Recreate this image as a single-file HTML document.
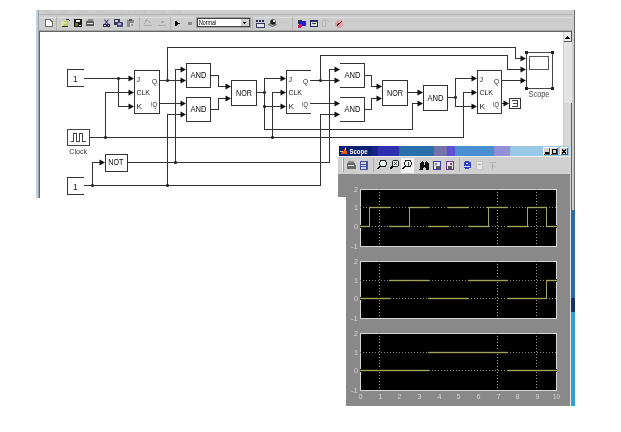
<!DOCTYPE html>
<html><head><meta charset="utf-8"><style>
html,body{margin:0;padding:0;background:#fff;width:621px;height:432px;overflow:hidden}
svg{display:block;font-family:"Liberation Sans",sans-serif;will-change:transform}
</style></head><body>
<svg width="621" height="432" viewBox="0 0 621 432" shape-rendering="crispEdges">
<rect x="36" y="10" width="539" height="21" fill="#cdcdcd"/><rect x="36" y="10" width="3" height="188" fill="#c2cfdc"/><rect x="38" y="10" width="1" height="188" fill="#9aa4ae"/><clipPath id="mc"><rect x="39" y="10" width="500" height="4"/></clipPath><g clip-path="url(#mc)"><text x="42" y="13" font-size="8" text-anchor="start" fill="#c2c2c2" font-weight="normal" textLength="10" lengthAdjust="spacingAndGlyphs" >File</text><text x="58" y="13" font-size="8" text-anchor="start" fill="#c2c2c2" font-weight="normal" textLength="10" lengthAdjust="spacingAndGlyphs" >Edit</text><text x="76" y="13" font-size="8" text-anchor="start" fill="#c2c2c2" font-weight="normal" textLength="12" lengthAdjust="spacingAndGlyphs" >View</text><text x="96" y="13" font-size="8" text-anchor="start" fill="#c2c2c2" font-weight="normal" textLength="28" lengthAdjust="spacingAndGlyphs" >Simulation</text><text x="128" y="13" font-size="8" text-anchor="start" fill="#c2c2c2" font-weight="normal" textLength="19" lengthAdjust="spacingAndGlyphs" >Format</text><text x="152" y="13" font-size="8" text-anchor="start" fill="#c2c2c2" font-weight="normal" textLength="14" lengthAdjust="spacingAndGlyphs" >Tools</text><text x="170" y="13" font-size="8" text-anchor="start" fill="#c2c2c2" font-weight="normal" textLength="12" lengthAdjust="spacingAndGlyphs" >Help</text></g><rect x="39" y="14" width="534" height="1" fill="#b0b0b0"/><rect x="39" y="17" width="534" height="1" fill="#dedede"/><rect x="39" y="30" width="534" height="1" fill="#a8a8a8"/><rect x="39" y="31" width="525" height="167" fill="#666"/><rect x="40" y="32" width="524" height="166" fill="#ffffff"/><rect x="563" y="32" width="9" height="179" fill="#cdcdcd"/><rect x="572" y="10" width="2" height="200" fill="#cdcdcd"/><rect x="574" y="10" width="1" height="200" fill="#6a6a6a"/><rect x="39" y="31" width="533" height="1" fill="#666"/><rect x="564" y="32" width="7" height="9" fill="#ececec"/><rect x="571" y="31" width="1" height="11" fill="#555"/><rect x="564" y="41" width="8" height="1" fill="#555"/><path d="M565 39 L567.5 36 L570 39 Z" fill="#000"/><rect x="564" y="42" width="8" height="61" fill="#e4e4e4"/><rect x="564" y="103" width="7" height="108" fill="#d8d8d8"/><rect x="571" y="103" width="1" height="108" fill="#606060"/><rect x="571" y="210" width="4" height="88" fill="#2c6aa6"/><rect x="571" y="298" width="4" height="14" fill="#123466"/><rect x="571" y="312" width="4" height="94" fill="#2fa0d4"/><rect x="570" y="210" width="1" height="196" fill="#e8e8e8"/><path d="M45.5 19.5 H50 L52.5 22 V26.5 H45.5 Z" fill="#fff" stroke="#6a6a6a"/><rect x="56" y="17" width="1" height="13" fill="#b4b2ae"/><path d="M61 26 L63 21 H69 L67 26 Z" fill="#b8c860"/><path d="M61 21 H64 V22 H67 V23 L62 26 H61 Z" fill="#d8e8a0"/><path d="M61.5 26.5 L67.5 26.5" stroke="#303010"/><path d="M66 19.5 L68.5 19.5 L69.5 21" stroke="#333" fill="none"/><rect x="74" y="19" width="8" height="8" fill="#1a1a10"/><rect x="76" y="20" width="4" height="2" fill="#e8e8e0"/><rect x="75" y="23" width="3" height="3" fill="#707030"/><rect x="79" y="25" width="2" height="1" fill="#ddd"/><path d="M86 22 Q86 20.5 88 20.5 H92 Q94 20.5 94 22 V26 H86 Z" fill="#5a5a5a" shape-rendering="geometricPrecision"/><rect x="87" y="23" width="6" height="1" fill="#ddd"/><rect x="88" y="19" width="5" height="2" fill="#888"/><path d="M104.5 19.5 L108.5 24.5 M108.5 19.5 L104.5 24.5" stroke="#3a3a78" stroke-width="1.2" shape-rendering="geometricPrecision"/><circle cx="105" cy="25.5" r="1.4" fill="none" stroke="#2a2a60"/><circle cx="108.5" cy="25.5" r="1.4" fill="none" stroke="#2a2a60"/><rect x="114" y="19" width="6" height="6" fill="#3a3a58"/><rect x="115" y="20" width="3" height="2" fill="#c8c8d8"/><rect x="117" y="22" width="6" height="5" fill="#4a4a80"/><rect x="118" y="23" width="3" height="2" fill="#b0b0d0"/><rect x="127" y="20" width="7" height="7" fill="#8a8a8a"/><rect x="129" y="19" width="3" height="2" fill="#555"/><rect x="130" y="23" width="4" height="4" fill="#d0d0d0"/><rect x="131" y="24" width="2" height="2" fill="#999"/><rect x="139" y="17" width="1" height="13" fill="#b4b2ae"/><path d="M144 25.5 H151.5 M144.5 24 L146.5 19.5 L150.5 23" stroke="#aaa" fill="none"/><path d="M157.5 25.5 H165.5" stroke="#aaa"/><rect x="161" y="21" width="3" height="2" fill="#b0b0b0"/><rect x="170" y="17" width="1" height="13" fill="#b4b2ae"/><path d="M175 20.5 L179.5 23.5 L175 26.5 Z" fill="#000"/><rect x="188" y="22" width="4" height="3" fill="#888"/><rect x="196" y="17" width="55" height="11" fill="#a0a0a0"/><rect x="197" y="18" width="53" height="9" fill="#454545"/><rect x="198" y="19" width="51" height="7" fill="#fff"/><text x="199" y="25.2" font-size="8" text-anchor="start" fill="#000" font-weight="normal" textLength="17" lengthAdjust="spacingAndGlyphs" >Normal</text><rect x="241" y="19" width="8" height="7" fill="#d0d0d0"/><path d="M242.5 22 H246.5 L244.5 24.5 Z" fill="#000"/><rect x="252" y="17" width="1" height="13" fill="#b4b2ae"/><rect x="256" y="20" width="2" height="2" fill="#2a2a58"/><rect x="259" y="20" width="2" height="2" fill="#2a2a58"/><rect x="262" y="20" width="2" height="2" fill="#2a2a58"/><rect x="256" y="23" width="9" height="5" fill="#3a3a60"/><rect x="257" y="24" width="7" height="3" fill="#e4e4ec"/><path d="M268.5 24.5 L272.5 22.5 L276.5 24.5 L272.5 26.5 Z" fill="#a8a8a8" stroke="#666" shape-rendering="geometricPrecision"/><circle cx="273" cy="22" r="2.7" fill="#1a1a1a" shape-rendering="geometricPrecision"/><rect x="273" y="20" width="2" height="2" fill="#f0f0f0"/><rect x="281" y="22" width="2" height="1" fill="#c0c0c0"/><rect x="284" y="22" width="2" height="1" fill="#c0c0c0"/><rect x="287" y="22" width="1" height="1" fill="#c0c0c0"/><rect x="292" y="17" width="1" height="13" fill="#b4b2ae"/><rect x="298" y="20" width="4" height="4" fill="#1a3a40"/><rect x="300" y="21" width="6" height="5" fill="#2020d0"/><circle cx="300" cy="26" r="2" fill="#d02060"/><rect x="310" y="20" width="8" height="7" fill="#2a2a70"/><rect x="311" y="22" width="6" height="4" fill="#d8e0d0"/><rect x="312" y="23" width="4" height="1" fill="#404860"/><path d="M322.5 26.5 V21.5 L325 19.5 L329.5 22 M325.5 21 V26.5 H322.5" stroke="#b8b8b8" fill="none"/><circle cx="339" cy="24" r="3.8" fill="#e0a0a8"/><path d="M336.5 26.5 L341.5 21.5 M337.5 25.5 L339 23" stroke="#300" stroke-width="1.4"/><rect x="67" y="69" width="17" height="1" fill="#333"/><rect x="67" y="86" width="17" height="1" fill="#333"/><rect x="67" y="69" width="1" height="18" fill="#333"/><text x="75.3" y="81.5" font-size="8.5" text-anchor="middle" fill="#222" font-weight="normal" >1</text><rect x="84" y="78" width="47" height="1" fill="#333"/><path d="M128.5 75.5 L134 78.5 L128.5 81.5 Z" fill="#111" shape-rendering="geometricPrecision"/><rect x="117" y="77" width="3" height="3" fill="#777"/><rect x="117" y="78" width="3" height="1" fill="#222"/><rect x="118" y="77" width="1" height="3" fill="#222"/><rect x="118" y="78" width="1" height="29" fill="#333"/><rect x="118" y="106" width="13" height="1" fill="#333"/><path d="M128.5 103.5 L134 106.5 L128.5 109.5 Z" fill="#111" shape-rendering="geometricPrecision"/><rect x="134" y="70" width="26" height="1" fill="#333"/><rect x="134" y="113" width="26" height="1" fill="#333"/><rect x="134" y="70" width="1" height="44" fill="#333"/><rect x="159" y="70" width="1" height="44" fill="#333"/><text x="136.5" y="81.5" font-size="8" text-anchor="start" fill="#1a1a1a" font-weight="normal" textLength="3.5" lengthAdjust="spacingAndGlyphs" >J</text><text x="136.5" y="95.3" font-size="8" text-anchor="start" fill="#1a1a1a" font-weight="normal" textLength="13.5" lengthAdjust="spacingAndGlyphs" >CLK</text><text x="136.5" y="109" font-size="8" text-anchor="start" fill="#1a1a1a" font-weight="normal" textLength="5.5" lengthAdjust="spacingAndGlyphs" >K</text><text x="157" y="84" font-size="8" text-anchor="end" fill="#1a1a1a" font-weight="normal" textLength="5" lengthAdjust="spacingAndGlyphs" >Q</text><text x="157" y="106.5" font-size="8" text-anchor="end" fill="#1a1a1a" font-weight="normal" textLength="6" lengthAdjust="spacingAndGlyphs" >!Q</text><rect x="105" y="92" width="26" height="1" fill="#333"/><path d="M128.5 89.5 L134 92.5 L128.5 95.5 Z" fill="#111" shape-rendering="geometricPrecision"/><rect x="105" y="92" width="1" height="46" fill="#333"/><rect x="104" y="136" width="3" height="3" fill="#777"/><rect x="104" y="137" width="3" height="1" fill="#222"/><rect x="105" y="136" width="1" height="3" fill="#222"/><rect x="67" y="129" width="23" height="1" fill="#444"/><rect x="67" y="145" width="23" height="1" fill="#444"/><rect x="67" y="129" width="1" height="17" fill="#444"/><rect x="89" y="129" width="1" height="17" fill="#444"/><path d="M70.5 141.5 H73.5 V133.5 H76.5 V141.5 H79.5 V133.5 H82.5 V141.5 H85.5" stroke="#444" fill="none"/><text x="78.2" y="153.5" font-size="8" text-anchor="middle" fill="#333" font-weight="normal" textLength="18" lengthAdjust="spacingAndGlyphs" >Clock</text><rect x="89" y="137" width="375" height="1" fill="#333"/><rect x="105" y="154" width="23" height="1" fill="#333"/><rect x="105" y="171" width="23" height="1" fill="#333"/><rect x="105" y="154" width="1" height="18" fill="#333"/><rect x="127" y="154" width="1" height="18" fill="#333"/><text x="115.8" y="165.3" font-size="8.5" text-anchor="middle" fill="#0a0a0a" font-weight="normal" textLength="15" lengthAdjust="spacingAndGlyphs" >NOT</text><rect x="67" y="177" width="17" height="1" fill="#333"/><rect x="67" y="194" width="17" height="1" fill="#333"/><rect x="67" y="177" width="1" height="18" fill="#333"/><text x="75.3" y="189.5" font-size="8.5" text-anchor="middle" fill="#222" font-weight="normal" >1</text><rect x="84" y="185" width="237" height="1" fill="#333"/><rect x="91" y="184" width="3" height="3" fill="#777"/><rect x="91" y="185" width="3" height="1" fill="#222"/><rect x="92" y="184" width="1" height="3" fill="#222"/><rect x="92" y="162" width="1" height="24" fill="#333"/><rect x="92" y="162" width="10" height="1" fill="#333"/><path d="M99.5 159.5 L105 162.5 L99.5 165.5 Z" fill="#111" shape-rendering="geometricPrecision"/><rect x="127" y="162" width="203" height="1" fill="#333"/><rect x="175" y="69" width="1" height="94" fill="#333"/><rect x="175" y="69" width="8" height="1" fill="#333"/><path d="M180.5 66.5 L186 69.5 L180.5 72.5 Z" fill="#111" shape-rendering="geometricPrecision"/><rect x="174" y="161" width="3" height="3" fill="#777"/><rect x="174" y="162" width="3" height="1" fill="#222"/><rect x="175" y="161" width="1" height="3" fill="#222"/><rect x="167" y="114" width="1" height="72" fill="#333"/><rect x="167" y="114" width="16" height="1" fill="#333"/><path d="M180.5 111.5 L186 114.5 L180.5 117.5 Z" fill="#111" shape-rendering="geometricPrecision"/><rect x="166" y="184" width="3" height="3" fill="#777"/><rect x="166" y="185" width="3" height="1" fill="#222"/><rect x="167" y="184" width="1" height="3" fill="#222"/><rect x="159" y="80" width="24" height="1" fill="#333"/><path d="M180.5 77.5 L186 80.5 L180.5 83.5 Z" fill="#111" shape-rendering="geometricPrecision"/><rect x="166" y="79" width="3" height="3" fill="#777"/><rect x="166" y="80" width="3" height="1" fill="#222"/><rect x="167" y="79" width="1" height="3" fill="#222"/><rect x="167" y="47" width="1" height="34" fill="#333"/><rect x="167" y="47" width="349" height="1" fill="#333"/><rect x="515" y="47" width="1" height="12" fill="#333"/><rect x="515" y="58" width="8" height="1" fill="#333"/><path d="M520.5 55.5 L526 58.5 L520.5 61.5 Z" fill="#111" shape-rendering="geometricPrecision"/><rect x="159" y="103" width="24" height="1" fill="#333"/><path d="M180.5 100.5 L186 103.5 L180.5 106.5 Z" fill="#111" shape-rendering="geometricPrecision"/><rect x="186" y="63" width="25" height="1" fill="#333"/><rect x="186" y="87" width="25" height="1" fill="#333"/><rect x="186" y="63" width="1" height="25" fill="#333"/><rect x="210" y="63" width="1" height="25" fill="#333"/><text x="198.5" y="78.2" font-size="8.5" text-anchor="middle" fill="#0a0a0a" font-weight="normal" textLength="16" lengthAdjust="spacingAndGlyphs" >AND</text><rect x="186" y="97" width="25" height="1" fill="#333"/><rect x="186" y="121" width="25" height="1" fill="#333"/><rect x="186" y="97" width="1" height="25" fill="#333"/><rect x="210" y="97" width="1" height="25" fill="#333"/><text x="198.5" y="112.2" font-size="8.5" text-anchor="middle" fill="#0a0a0a" font-weight="normal" textLength="16" lengthAdjust="spacingAndGlyphs" >AND</text><rect x="210" y="75" width="9" height="1" fill="#333"/><rect x="218" y="75" width="1" height="12" fill="#333"/><rect x="218" y="86" width="10" height="1" fill="#333"/><path d="M225.5 83.5 L231 86.5 L225.5 89.5 Z" fill="#111" shape-rendering="geometricPrecision"/><rect x="210" y="109" width="9" height="1" fill="#333"/><rect x="218" y="98" width="1" height="12" fill="#333"/><rect x="218" y="98" width="10" height="1" fill="#333"/><path d="M225.5 95.5 L231 98.5 L225.5 101.5 Z" fill="#111" shape-rendering="geometricPrecision"/><rect x="231" y="80" width="26" height="1" fill="#333"/><rect x="231" y="105" width="26" height="1" fill="#333"/><rect x="231" y="80" width="1" height="26" fill="#333"/><rect x="256" y="80" width="1" height="26" fill="#333"/><text x="244.0" y="95.7" font-size="8.5" text-anchor="middle" fill="#0a0a0a" font-weight="normal" textLength="16" lengthAdjust="spacingAndGlyphs" >NOR</text><rect x="256" y="92" width="9" height="1" fill="#333"/><rect x="263" y="91" width="3" height="3" fill="#777"/><rect x="263" y="92" width="3" height="1" fill="#222"/><rect x="264" y="91" width="1" height="3" fill="#222"/><rect x="264" y="78" width="1" height="52" fill="#333"/><rect x="264" y="78" width="19" height="1" fill="#333"/><path d="M280.5 75.5 L286 78.5 L280.5 81.5 Z" fill="#111" shape-rendering="geometricPrecision"/><rect x="264" y="106" width="19" height="1" fill="#333"/><path d="M280.5 103.5 L286 106.5 L280.5 109.5 Z" fill="#111" shape-rendering="geometricPrecision"/><rect x="263" y="105" width="3" height="3" fill="#777"/><rect x="263" y="106" width="3" height="1" fill="#222"/><rect x="264" y="105" width="1" height="3" fill="#222"/><rect x="264" y="129" width="149" height="1" fill="#333"/><rect x="412" y="103" width="1" height="27" fill="#333"/><rect x="412" y="103" width="8" height="1" fill="#333"/><path d="M417.5 100.5 L423 103.5 L417.5 106.5 Z" fill="#111" shape-rendering="geometricPrecision"/><rect x="286" y="70" width="25" height="1" fill="#333"/><rect x="286" y="113" width="25" height="1" fill="#333"/><rect x="286" y="70" width="1" height="44" fill="#333"/><text x="288.5" y="81.5" font-size="8" text-anchor="start" fill="#1a1a1a" font-weight="normal" textLength="3.5" lengthAdjust="spacingAndGlyphs" >J</text><text x="288.5" y="95.3" font-size="8" text-anchor="start" fill="#1a1a1a" font-weight="normal" textLength="13.5" lengthAdjust="spacingAndGlyphs" >CLK</text><text x="288.5" y="109" font-size="8" text-anchor="start" fill="#1a1a1a" font-weight="normal" textLength="5.5" lengthAdjust="spacingAndGlyphs" >K</text><text x="308" y="84" font-size="8" text-anchor="end" fill="#1a1a1a" font-weight="normal" textLength="5" lengthAdjust="spacingAndGlyphs" >Q</text><text x="308" y="106.5" font-size="8" text-anchor="end" fill="#1a1a1a" font-weight="normal" textLength="6" lengthAdjust="spacingAndGlyphs" >!Q</text><rect x="272" y="92" width="1" height="46" fill="#333"/><rect x="272" y="92" width="11" height="1" fill="#333"/><path d="M280.5 89.5 L286 92.5 L280.5 95.5 Z" fill="#111" shape-rendering="geometricPrecision"/><rect x="271" y="136" width="3" height="3" fill="#777"/><rect x="271" y="137" width="3" height="1" fill="#222"/><rect x="272" y="136" width="1" height="3" fill="#222"/><rect x="310" y="80" width="27" height="1" fill="#333"/><path d="M334.5 77.5 L340 80.5 L334.5 83.5 Z" fill="#111" shape-rendering="geometricPrecision"/><rect x="319" y="79" width="3" height="3" fill="#777"/><rect x="319" y="80" width="3" height="1" fill="#222"/><rect x="320" y="79" width="1" height="3" fill="#222"/><rect x="320" y="55" width="1" height="26" fill="#333"/><rect x="320" y="55" width="188" height="1" fill="#333"/><rect x="507" y="55" width="1" height="15" fill="#333"/><rect x="507" y="69" width="16" height="1" fill="#333"/><path d="M520.5 66.5 L526 69.5 L520.5 72.5 Z" fill="#111" shape-rendering="geometricPrecision"/><rect x="310" y="103" width="27" height="1" fill="#333"/><path d="M334.5 100.5 L340 103.5 L334.5 106.5 Z" fill="#111" shape-rendering="geometricPrecision"/><rect x="329" y="69" width="1" height="94" fill="#333"/><rect x="329" y="69" width="8" height="1" fill="#333"/><path d="M334.5 66.5 L340 69.5 L334.5 72.5 Z" fill="#111" shape-rendering="geometricPrecision"/><rect x="320" y="114" width="1" height="72" fill="#333"/><rect x="320" y="114" width="17" height="1" fill="#333"/><path d="M334.5 111.5 L340 114.5 L334.5 117.5 Z" fill="#111" shape-rendering="geometricPrecision"/><rect x="340" y="63" width="25" height="1" fill="#333"/><rect x="340" y="87" width="25" height="1" fill="#333"/><rect x="364" y="63" width="1" height="25" fill="#333"/><text x="352.5" y="78.2" font-size="8.5" text-anchor="middle" fill="#0a0a0a" font-weight="normal" textLength="16" lengthAdjust="spacingAndGlyphs" >AND</text><rect x="340" y="97" width="25" height="1" fill="#333"/><rect x="340" y="121" width="25" height="1" fill="#333"/><rect x="364" y="97" width="1" height="25" fill="#333"/><text x="352.5" y="112.2" font-size="8.5" text-anchor="middle" fill="#0a0a0a" font-weight="normal" textLength="16" lengthAdjust="spacingAndGlyphs" >AND</text><rect x="364" y="75" width="8" height="1" fill="#333"/><rect x="371" y="75" width="1" height="12" fill="#333"/><rect x="371" y="86" width="8" height="1" fill="#333"/><path d="M376.5 83.5 L382 86.5 L376.5 89.5 Z" fill="#111" shape-rendering="geometricPrecision"/><rect x="364" y="109" width="8" height="1" fill="#333"/><rect x="371" y="98" width="1" height="12" fill="#333"/><rect x="371" y="98" width="8" height="1" fill="#333"/><path d="M376.5 95.5 L382 98.5 L376.5 101.5 Z" fill="#111" shape-rendering="geometricPrecision"/><rect x="382" y="80" width="26" height="1" fill="#333"/><rect x="382" y="105" width="26" height="1" fill="#333"/><rect x="382" y="80" width="1" height="26" fill="#333"/><rect x="407" y="80" width="1" height="26" fill="#333"/><text x="395.0" y="95.7" font-size="8.5" text-anchor="middle" fill="#0a0a0a" font-weight="normal" textLength="16" lengthAdjust="spacingAndGlyphs" >NOR</text><rect x="407" y="92" width="13" height="1" fill="#333"/><path d="M417.5 89.5 L423 92.5 L417.5 95.5 Z" fill="#111" shape-rendering="geometricPrecision"/><rect x="423" y="85" width="25" height="1" fill="#333"/><rect x="423" y="110" width="25" height="1" fill="#333"/><rect x="423" y="85" width="1" height="26" fill="#333"/><rect x="447" y="85" width="1" height="26" fill="#333"/><text x="435.5" y="100.7" font-size="8.5" text-anchor="middle" fill="#0a0a0a" font-weight="normal" textLength="16" lengthAdjust="spacingAndGlyphs" >AND</text><rect x="447" y="97" width="9" height="1" fill="#333"/><rect x="454" y="96" width="3" height="3" fill="#777"/><rect x="454" y="97" width="3" height="1" fill="#222"/><rect x="455" y="96" width="1" height="3" fill="#222"/><rect x="455" y="78" width="1" height="29" fill="#333"/><rect x="455" y="78" width="19" height="1" fill="#333"/><path d="M471.5 75.5 L477 78.5 L471.5 81.5 Z" fill="#111" shape-rendering="geometricPrecision"/><rect x="455" y="106" width="19" height="1" fill="#333"/><path d="M471.5 103.5 L477 106.5 L471.5 109.5 Z" fill="#111" shape-rendering="geometricPrecision"/><rect x="463" y="92" width="1" height="46" fill="#333"/><rect x="463" y="92" width="11" height="1" fill="#333"/><path d="M471.5 89.5 L477 92.5 L471.5 95.5 Z" fill="#111" shape-rendering="geometricPrecision"/><rect x="477" y="70" width="25" height="1" fill="#333"/><rect x="477" y="113" width="25" height="1" fill="#333"/><rect x="477" y="70" width="1" height="44" fill="#333"/><rect x="501" y="70" width="1" height="44" fill="#333"/><text x="479.5" y="81.5" font-size="8" text-anchor="start" fill="#1a1a1a" font-weight="normal" textLength="3.5" lengthAdjust="spacingAndGlyphs" >J</text><text x="479.5" y="95.3" font-size="8" text-anchor="start" fill="#1a1a1a" font-weight="normal" textLength="13.5" lengthAdjust="spacingAndGlyphs" >CLK</text><text x="479.5" y="109" font-size="8" text-anchor="start" fill="#1a1a1a" font-weight="normal" textLength="5.5" lengthAdjust="spacingAndGlyphs" >K</text><text x="499" y="84" font-size="8" text-anchor="end" fill="#1a1a1a" font-weight="normal" textLength="5" lengthAdjust="spacingAndGlyphs" >Q</text><text x="499" y="106.5" font-size="8" text-anchor="end" fill="#1a1a1a" font-weight="normal" textLength="6" lengthAdjust="spacingAndGlyphs" >!Q</text><rect x="501" y="80" width="22" height="1" fill="#333"/><path d="M520.5 77.5 L526 80.5 L520.5 83.5 Z" fill="#111" shape-rendering="geometricPrecision"/><rect x="501" y="103" width="5" height="1" fill="#333"/><path d="M503.5 100.5 L509 103.5 L503.5 106.5 Z" fill="#111" shape-rendering="geometricPrecision"/><rect x="509" y="98" width="12" height="1" fill="#333"/><rect x="509" y="108" width="12" height="1" fill="#333"/><rect x="509" y="98" width="1" height="11" fill="#333"/><rect x="520" y="98" width="1" height="11" fill="#333"/><path d="M512 100.5 H517.5 V106.5 H512 M512.5 103.5 H517" stroke="#444" fill="none"/><rect x="526" y="52" width="27" height="1" fill="#444"/><rect x="526" y="88" width="27" height="1" fill="#444"/><rect x="526" y="52" width="1" height="37" fill="#444"/><rect x="552" y="52" width="1" height="37" fill="#444"/><rect x="529" y="56" width="20" height="1" fill="#555"/><rect x="529" y="69" width="20" height="1" fill="#555"/><rect x="529" y="56" width="1" height="14" fill="#555"/><rect x="548" y="56" width="1" height="14" fill="#555"/><rect x="525" y="51" width="3" height="3" fill="#222"/><rect x="551" y="51" width="3" height="3" fill="#222"/><rect x="525" y="87" width="3" height="3" fill="#222"/><rect x="551" y="87" width="3" height="3" fill="#222"/><text x="539" y="97" font-size="9" text-anchor="middle" fill="#4a4a4a" font-weight="normal" textLength="21" lengthAdjust="spacingAndGlyphs" >Scope</text><rect x="339" y="146" width="230" height="10" fill="#0c2070"/><rect x="372" y="146" width="6" height="10" fill="#1a2488"/><rect x="378" y="146" width="21" height="10" fill="#2e30b0"/><rect x="399" y="146" width="35" height="10" fill="#2a6eaa"/><rect x="434" y="146" width="13" height="10" fill="#7474a8"/><rect x="447" y="146" width="8" height="10" fill="#5c52d4"/><rect x="455" y="146" width="39" height="10" fill="#4a90d0"/><rect x="494" y="146" width="16" height="10" fill="#9490d8"/><rect x="510" y="146" width="59" height="10" fill="#98cae8"/><path d="M341 154 L343.5 151 L345.5 147 L347.5 154 Z" fill="#e06018"/><rect x="340" y="151" width="3" height="1" fill="#f0c080"/><rect x="345" y="148" width="1" height="2" fill="#ffd0a0"/><text x="349.5" y="154" font-size="8" text-anchor="start" fill="#fff" font-weight="bold" textLength="18" lengthAdjust="spacingAndGlyphs" >Scope</text><rect x="543" y="147" width="7" height="8" fill="#d4d2ce"/><path d="M543.5 154.5 V147.5 H549.5" stroke="#fff" fill="none"/><path d="M543.5 154.5 H549.5 V147.5" stroke="#555" fill="none"/><rect x="550" y="147" width="8" height="8" fill="#d4d2ce"/><path d="M550.5 154.5 V147.5 H557.5" stroke="#fff" fill="none"/><path d="M550.5 154.5 H557.5 V147.5" stroke="#555" fill="none"/><rect x="560" y="147" width="8" height="8" fill="#d4d2ce"/><path d="M560.5 154.5 V147.5 H567.5" stroke="#fff" fill="none"/><path d="M560.5 154.5 H567.5 V147.5" stroke="#555" fill="none"/><rect x="545" y="152" width="4" height="2" fill="#000"/><path d="M552.5 149.5 H556.5 V153.5 H552.5 Z" stroke="#000" fill="none"/><rect x="552" y="149" width="5" height="1" fill="#000"/><path d="M562 149.5 L566 153.5 M566 149.5 L562 153.5" stroke="#000" stroke-width="1.1"/><rect x="338" y="156" width="232" height="18" fill="#d0d0d0"/><rect x="338" y="156" width="233" height="1" fill="#eeeeee"/><rect x="342" y="158" width="1" height="14" fill="#f4f4f4"/><rect x="343" y="158" width="1" height="14" fill="#999"/><path d="M346.5 165 Q346.5 163 349 163 H353 Q355.5 163 355.5 165 V168.5 H346.5 Z" fill="#666"/><rect x="348" y="161" width="6" height="2" fill="#888"/><rect x="348" y="165" width="6" height="1" fill="#ddd"/><rect x="360" y="161" width="8" height="9" fill="#4850a0"/><rect x="361" y="162" width="5" height="7" fill="#d0d0e8"/><rect x="361" y="164" width="6" height="1" fill="#5058a8"/><rect x="361" y="166" width="6" height="1" fill="#5058a8"/><rect x="373" y="158" width="1" height="14" fill="#b0b0b0"/><rect x="401" y="158" width="13" height="15" fill="#f2f2f2"/><circle cx="383" cy="163.5" r="3.3" fill="#e8f4f4" stroke="#222" stroke-width="1"/><path d="M380.7 165.8 L377.5 169.0" stroke="#111" stroke-width="1.6"/><circle cx="395.5" cy="163.5" r="3.3" fill="#e8f4f4" stroke="#222" stroke-width="1"/><path d="M393.2 165.8 L390.0 169.0" stroke="#111" stroke-width="1.6"/><path d="M394.0 162.0 L397.0 165.0 M397.0 162.0 L394.0 165.0" stroke="#222" stroke-width="0.8"/><circle cx="408" cy="163.5" r="3.3" fill="#e8f4f4" stroke="#222" stroke-width="1"/><path d="M405.7 165.8 L402.5 169.0" stroke="#111" stroke-width="1.6"/><path d="M408 161.5 V165.5" stroke="#222" stroke-width="0.8"/><path d="M419.5 169.5 L420.5 163 L422.5 161 L424 163 V165 H425 V163 L426.5 161 L428.5 163 L429.5 169.5 L426 169.5 L425 167 H424 L423 169.5 Z" fill="#111"/><rect x="433" y="161" width="8" height="9" fill="#3a40a8"/><rect x="434" y="162" width="6" height="7" fill="#e4e4ec"/><rect x="436" y="166" width="4" height="3" fill="#555"/><rect x="435" y="163" width="2" height="2" fill="#888"/><rect x="446" y="161" width="8" height="9" fill="#6a3a98"/><rect x="447" y="162" width="6" height="7" fill="#ece4ec"/><rect x="448" y="166" width="4" height="3" fill="#555"/><rect x="450" y="163" width="2" height="2" fill="#a04060"/><rect x="459" y="158" width="1" height="14" fill="#b0b0b0"/><path d="M463.5 162 Q467 160 470.5 162 V168 Q467 170 463.5 168 Z" fill="#3040c8"/><path d="M465 164 L467 162.5 L469 164 Z" fill="#fff"/><rect x="464" y="166" width="6" height="1" fill="#dde"/><rect x="476" y="161" width="7" height="9" fill="#c4c4c4"/><rect x="477" y="162" width="5" height="7" fill="#e4e4e4"/><rect x="478" y="164" width="3" height="1" fill="#aaa"/><path d="M489 162.5 H496 M492.5 162.5 V169.5 M490 166 H495" stroke="#b4b4b4" fill="none"/><rect x="338" y="174" width="232" height="23" fill="#898989"/><rect x="346" y="197" width="224" height="209" fill="#898989"/><rect x="360" y="189" width="197" height="58" fill="#000"/><rect x="360.5" y="189.5" width="196" height="57" fill="none" stroke="#d8d8d8"/><line x1="360" y1="207.5" x2="556" y2="207.5" stroke="#8a8a8a" stroke-dasharray="1 2"/><line x1="360" y1="226.5" x2="556" y2="226.5" stroke="#8a8a8a" stroke-dasharray="1 2"/><line x1="379.5" y1="189" x2="379.5" y2="246" stroke="#a0a0a0" stroke-dasharray="1 2"/><line x1="497.5" y1="189" x2="497.5" y2="246" stroke="#a0a0a0" stroke-dasharray="1 2"/><line x1="536.5" y1="189" x2="536.5" y2="246" stroke="#a0a0a0" stroke-dasharray="1 2"/><rect x="360" y="225" width="10" height="3" fill="#1c1c10"/><rect x="360" y="226" width="10" height="1" fill="#a4a45a"/><rect x="369" y="206" width="21" height="3" fill="#1c1c10"/><rect x="369" y="207" width="21" height="1" fill="#a4a45a"/><rect x="389" y="225" width="21" height="3" fill="#1c1c10"/><rect x="389" y="226" width="21" height="1" fill="#a4a45a"/><rect x="409" y="206" width="20" height="3" fill="#1c1c10"/><rect x="409" y="207" width="20" height="1" fill="#a4a45a"/><rect x="428" y="225" width="21" height="3" fill="#1c1c10"/><rect x="428" y="226" width="21" height="1" fill="#a4a45a"/><rect x="448" y="206" width="21" height="3" fill="#1c1c10"/><rect x="448" y="207" width="21" height="1" fill="#a4a45a"/><rect x="468" y="225" width="20" height="3" fill="#1c1c10"/><rect x="468" y="226" width="20" height="1" fill="#a4a45a"/><rect x="487" y="206" width="21" height="3" fill="#1c1c10"/><rect x="487" y="207" width="21" height="1" fill="#a4a45a"/><rect x="507" y="225" width="21" height="3" fill="#1c1c10"/><rect x="507" y="226" width="21" height="1" fill="#a4a45a"/><rect x="527" y="206" width="20" height="3" fill="#1c1c10"/><rect x="527" y="207" width="20" height="1" fill="#a4a45a"/><rect x="546" y="225" width="11" height="3" fill="#1c1c10"/><rect x="546" y="226" width="11" height="1" fill="#a4a45a"/><rect x="369" y="207" width="1" height="20" fill="#a4a45a"/><rect x="409" y="207" width="1" height="20" fill="#a4a45a"/><rect x="488" y="207" width="1" height="20" fill="#a4a45a"/><rect x="527" y="207" width="1" height="20" fill="#a4a45a"/><rect x="546" y="207" width="1" height="20" fill="#a4a45a"/><text x="358" y="192" font-size="8" text-anchor="end" fill="#d4d4d4" font-weight="normal" textLength="4" lengthAdjust="spacingAndGlyphs" >2</text><text x="358" y="210" font-size="8" text-anchor="end" fill="#d4d4d4" font-weight="normal" textLength="4" lengthAdjust="spacingAndGlyphs" >1</text><text x="358" y="229" font-size="8" text-anchor="end" fill="#d4d4d4" font-weight="normal" textLength="4" lengthAdjust="spacingAndGlyphs" >0</text><text x="358" y="249" font-size="8" text-anchor="end" fill="#d4d4d4" font-weight="normal" textLength="7" lengthAdjust="spacingAndGlyphs" >-1</text><rect x="360" y="261" width="197" height="58" fill="#000"/><rect x="360.5" y="261.5" width="196" height="57" fill="none" stroke="#d8d8d8"/><line x1="360" y1="280.5" x2="556" y2="280.5" stroke="#8a8a8a" stroke-dasharray="1 2"/><line x1="360" y1="298.5" x2="556" y2="298.5" stroke="#8a8a8a" stroke-dasharray="1 2"/><line x1="379.5" y1="261" x2="379.5" y2="318" stroke="#a0a0a0" stroke-dasharray="1 2"/><line x1="497.5" y1="261" x2="497.5" y2="318" stroke="#a0a0a0" stroke-dasharray="1 2"/><line x1="536.5" y1="261" x2="536.5" y2="318" stroke="#a0a0a0" stroke-dasharray="1 2"/><rect x="360" y="297" width="30" height="3" fill="#1c1c10"/><rect x="360" y="298" width="30" height="1" fill="#a4a45a"/><rect x="389" y="279" width="40" height="3" fill="#1c1c10"/><rect x="389" y="280" width="40" height="1" fill="#a4a45a"/><rect x="428" y="297" width="41" height="3" fill="#1c1c10"/><rect x="428" y="298" width="41" height="1" fill="#a4a45a"/><rect x="468" y="279" width="40" height="3" fill="#1c1c10"/><rect x="468" y="280" width="40" height="1" fill="#a4a45a"/><rect x="507" y="297" width="40" height="3" fill="#1c1c10"/><rect x="507" y="298" width="40" height="1" fill="#a4a45a"/><rect x="546" y="279" width="11" height="3" fill="#1c1c10"/><rect x="546" y="280" width="11" height="1" fill="#a4a45a"/><rect x="546" y="280" width="1" height="19" fill="#a4a45a"/><text x="358" y="264" font-size="8" text-anchor="end" fill="#d4d4d4" font-weight="normal" textLength="4" lengthAdjust="spacingAndGlyphs" >2</text><text x="358" y="283" font-size="8" text-anchor="end" fill="#d4d4d4" font-weight="normal" textLength="4" lengthAdjust="spacingAndGlyphs" >1</text><text x="358" y="301" font-size="8" text-anchor="end" fill="#d4d4d4" font-weight="normal" textLength="4" lengthAdjust="spacingAndGlyphs" >0</text><text x="358" y="321" font-size="8" text-anchor="end" fill="#d4d4d4" font-weight="normal" textLength="7" lengthAdjust="spacingAndGlyphs" >-1</text><rect x="360" y="333" width="197" height="58" fill="#000"/><rect x="360.5" y="333.5" width="196" height="57" fill="none" stroke="#d8d8d8"/><line x1="360" y1="352.5" x2="556" y2="352.5" stroke="#8a8a8a" stroke-dasharray="1 2"/><line x1="360" y1="370.5" x2="556" y2="370.5" stroke="#8a8a8a" stroke-dasharray="1 2"/><line x1="379.5" y1="333" x2="379.5" y2="390" stroke="#a0a0a0" stroke-dasharray="1 2"/><line x1="497.5" y1="333" x2="497.5" y2="390" stroke="#a0a0a0" stroke-dasharray="1 2"/><line x1="536.5" y1="333" x2="536.5" y2="390" stroke="#a0a0a0" stroke-dasharray="1 2"/><rect x="360" y="369" width="69" height="3" fill="#1c1c10"/><rect x="360" y="370" width="69" height="1" fill="#a4a45a"/><rect x="428" y="351" width="80" height="3" fill="#1c1c10"/><rect x="428" y="352" width="80" height="1" fill="#a4a45a"/><rect x="507" y="369" width="50" height="3" fill="#1c1c10"/><rect x="507" y="370" width="50" height="1" fill="#a4a45a"/><text x="358" y="336" font-size="8" text-anchor="end" fill="#d4d4d4" font-weight="normal" textLength="4" lengthAdjust="spacingAndGlyphs" >2</text><text x="358" y="355" font-size="8" text-anchor="end" fill="#d4d4d4" font-weight="normal" textLength="4" lengthAdjust="spacingAndGlyphs" >1</text><text x="358" y="373" font-size="8" text-anchor="end" fill="#d4d4d4" font-weight="normal" textLength="4" lengthAdjust="spacingAndGlyphs" >0</text><text x="358" y="393" font-size="8" text-anchor="end" fill="#d4d4d4" font-weight="normal" textLength="7" lengthAdjust="spacingAndGlyphs" >-1</text><text x="360.5" y="399" font-size="8" text-anchor="middle" fill="#d4d4d4" font-weight="normal" textLength="4" lengthAdjust="spacingAndGlyphs" >0</text><text x="380.5" y="399" font-size="8" text-anchor="middle" fill="#d4d4d4" font-weight="normal" textLength="4" lengthAdjust="spacingAndGlyphs" >1</text><text x="399.5" y="399" font-size="8" text-anchor="middle" fill="#d4d4d4" font-weight="normal" textLength="4" lengthAdjust="spacingAndGlyphs" >2</text><text x="419.5" y="399" font-size="8" text-anchor="middle" fill="#d4d4d4" font-weight="normal" textLength="4" lengthAdjust="spacingAndGlyphs" >3</text><text x="439.5" y="399" font-size="8" text-anchor="middle" fill="#d4d4d4" font-weight="normal" textLength="4" lengthAdjust="spacingAndGlyphs" >4</text><text x="458.5" y="399" font-size="8" text-anchor="middle" fill="#d4d4d4" font-weight="normal" textLength="4" lengthAdjust="spacingAndGlyphs" >5</text><text x="478.5" y="399" font-size="8" text-anchor="middle" fill="#d4d4d4" font-weight="normal" textLength="4" lengthAdjust="spacingAndGlyphs" >6</text><text x="498.5" y="399" font-size="8" text-anchor="middle" fill="#d4d4d4" font-weight="normal" textLength="4" lengthAdjust="spacingAndGlyphs" >7</text><text x="517.5" y="399" font-size="8" text-anchor="middle" fill="#d4d4d4" font-weight="normal" textLength="4" lengthAdjust="spacingAndGlyphs" >8</text><text x="537.5" y="399" font-size="8" text-anchor="middle" fill="#d4d4d4" font-weight="normal" textLength="4" lengthAdjust="spacingAndGlyphs" >9</text><text x="556.5" y="399" font-size="8" text-anchor="middle" fill="#d4d4d4" font-weight="normal" textLength="7" lengthAdjust="spacingAndGlyphs" >10</text>
</svg></body></html>
